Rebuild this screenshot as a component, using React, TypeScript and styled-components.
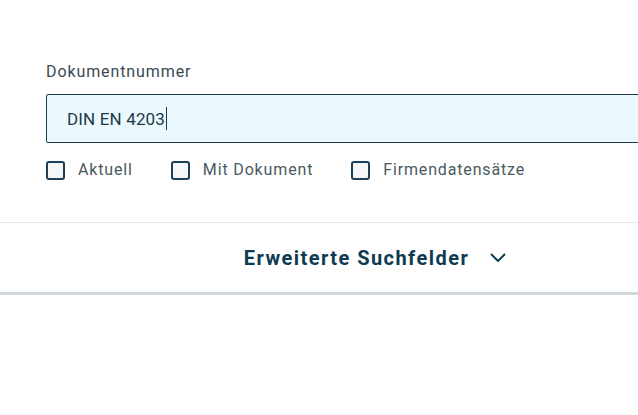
import React from "react";
import styled, { createGlobalStyle } from "styled-components";

const Global = createGlobalStyle`
  html, body { margin: 0; padding: 0; background: #ffffff; overflow: hidden; }
  body { font-family: Roboto, "Liberation Sans", sans-serif; }
`;

const Page = styled.div`
  width: 750px;
  display: flex;
  flex-direction: column;
`;

const Fields = styled.div`
  padding: 62px 0 0 46px;
  display: flex;
  flex-direction: column;
`;

const Label = styled.label`
  font-size: 16px;
  letter-spacing: 0.9px;
  color: #3b4a52;
  line-height: 20px;
  margin-bottom: 12px;
`;

const InputBox = styled.div`
  flex-shrink: 0;
  height: 49px;
  box-sizing: border-box;
  border: 1px solid #1d3d4a;
  border-radius: 2px;
  background: #ebf8fe;
  display: flex;
  align-items: center;
  padding-left: 20px;
  font-size: 17px;
  letter-spacing: 0.15px;
  color: #1e3a44;
`;

const Caret = styled.span`
  display: inline-block;
  width: 1px;
  height: 23px;
  background: #1e3a44;
  margin-left: 1px;
`;

const Options = styled.div`
  display: flex;
  gap: 38px;
  margin-top: 17px;
`;

const Option = styled.label`
  display: flex;
  align-items: center;
  gap: 13px;
  font-size: 16px;
  letter-spacing: 0.85px;
  line-height: 20px;
  color: #4a5a60;
`;

const Box = styled.span`
  flex-shrink: 0;
  width: 19px;
  height: 19px;
  box-sizing: border-box;
  border: 2px solid #1c3f5a;
  border-radius: 3px;
  background: #f4f6f8;
`;

const Divider = styled.div`
  height: 1px;
  background: #e6e8ea;
  margin-top: 42px;
`;

const Toggle = styled.button`
  height: 69px;
  border: none;
  background: #fff;
  display: flex;
  align-items: center;
  justify-content: center;
  gap: 21px;
  font-family: inherit;
  font-size: 20px;
  letter-spacing: 1.45px;
  font-weight: 700;
  color: #0f3b52;
  padding: 0;
`;

const BottomLine = styled.div`
  height: 3px;
  background: #d0d8de;
`;

export default function App() {
  return (
    <>
      <Global />
      <Page>
        <Fields>
          <Label>Dokumentnummer</Label>
          <InputBox>
            DIN EN 4203<Caret />
          </InputBox>
          <Options>
            <Option><Box />Aktuell</Option>
            <Option><Box />Mit Dokument</Option>
            <Option><Box />Firmendatensätze</Option>
          </Options>
        </Fields>
        <Divider />
        <Toggle>
          Erweiterte Suchfelder
          <svg width="16" height="9" viewBox="0 0 16 9" fill="none">
            <path d="M1 1l7 7 7-7" stroke="#0f3b52" strokeWidth="2" />
          </svg>
        </Toggle>
        <BottomLine />
      </Page>
    </>
  );
}
